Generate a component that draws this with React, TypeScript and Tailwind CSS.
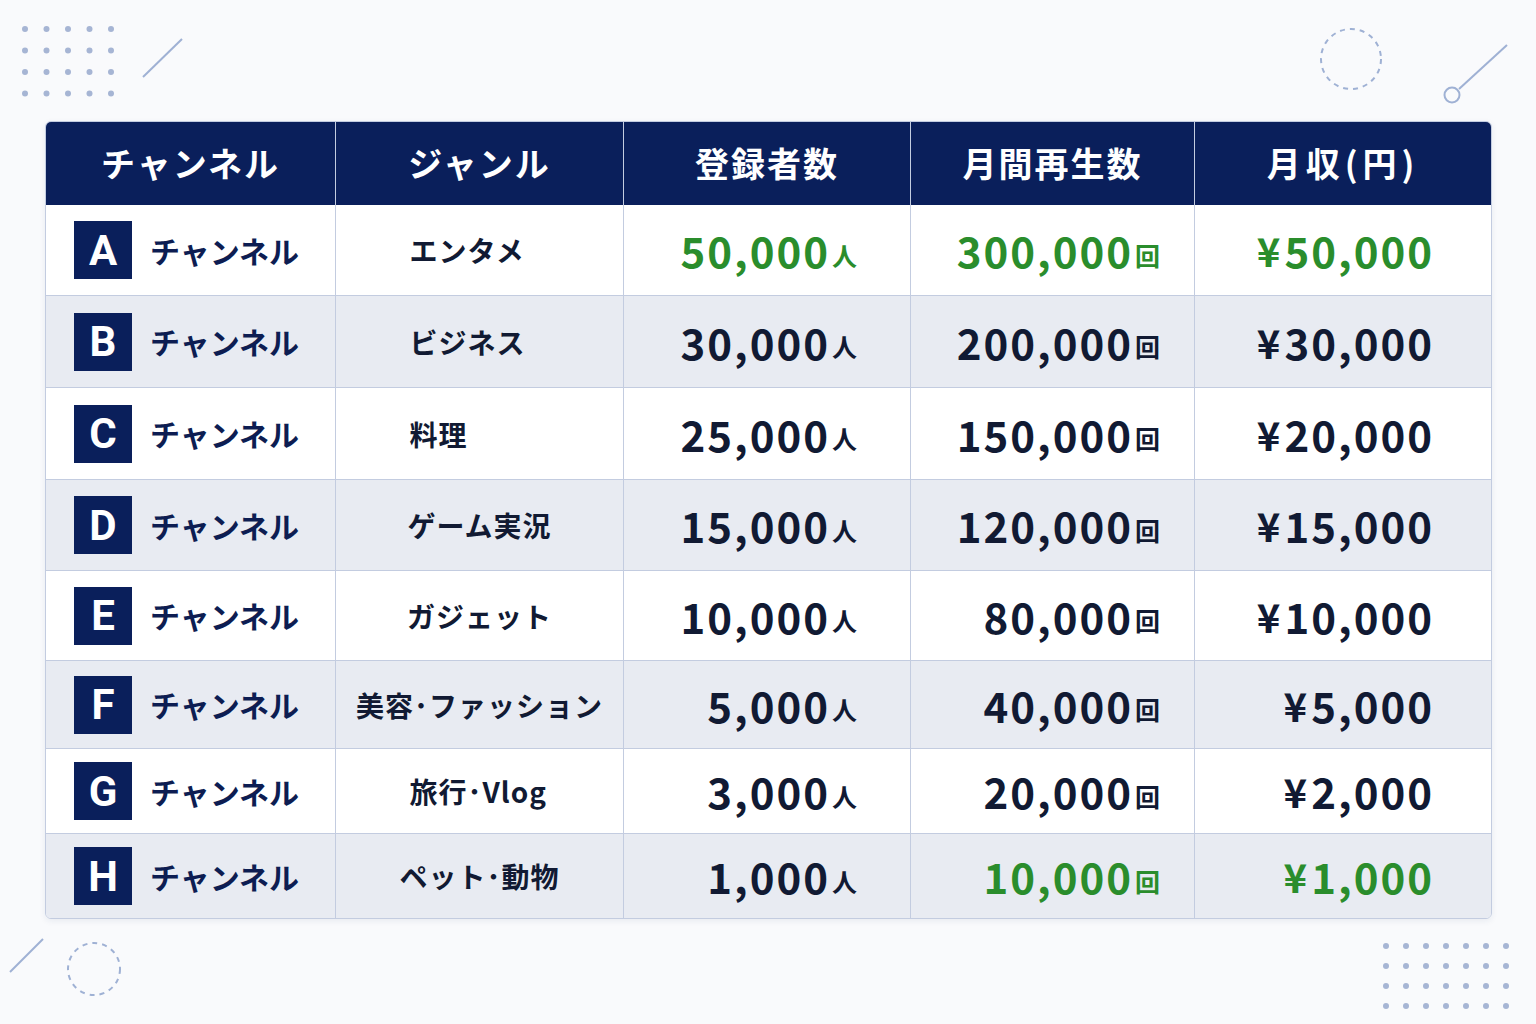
import React from "react";

type Row = {
  letter: string;
  genre: string;
  subs: string;
  plays: string;
  income: string;
  height: string;
  shaded: boolean;
  greenSubs?: boolean;
  greenPlays?: boolean;
  greenIncome?: boolean;
};

const ROWS: Row[] = [
  { letter: "A", genre: "エンタメ", subs: "50,000", plays: "300,000", income: "50,000", height: "h-[91px]", shaded: false, greenSubs: true, greenPlays: true, greenIncome: true },
  { letter: "B", genre: "ビジネス", subs: "30,000", plays: "200,000", income: "30,000", height: "h-[92px]", shaded: true },
  { letter: "C", genre: "料理", subs: "25,000", plays: "150,000", income: "20,000", height: "h-[92px]", shaded: false },
  { letter: "D", genre: "ゲーム実況", subs: "15,000", plays: "120,000", income: "15,000", height: "h-[91px]", shaded: true },
  { letter: "E", genre: "ガジェット", subs: "10,000", plays: "80,000", income: "10,000", height: "h-[90px]", shaded: false },
  { letter: "F", genre: "美容・ファッション", subs: "5,000", plays: "40,000", income: "5,000", height: "h-[88px]", shaded: true },
  { letter: "G", genre: "旅行・Vlog", subs: "3,000", plays: "20,000", income: "2,000", height: "h-[85px]", shaded: false },
  { letter: "H", genre: "ペット・動物", subs: "1,000", plays: "10,000", income: "1,000", height: "h-[84px]", shaded: true, greenPlays: true, greenIncome: true },
];

const HEADERS = ["チャンネル", "ジャンル", "登録者数", "月間再生数", "月収(円)"];

const FONT = "[font-family:'Noto_Sans_CJK_JP','Noto_Sans',sans-serif]";

function DotGrid({ cols, rows, gap }: { cols: number; rows: number; gap: number }) {
  return (
    <svg width={(cols - 1) * gap + 8} height={(rows - 1) * gap + 8}>
      {Array.from({ length: rows }).map((_, r) =>
        Array.from({ length: cols }).map((_, c) => (
          <circle key={`${r}-${c}`} cx={4 + c * gap} cy={4 + r * gap} r={3} fill="#a6b5d4" />
        ))
      )}
    </svg>
  );
}

function Decorations() {
  return (
    <>
      <div className="absolute left-[21px] top-[25px]">
        <DotGrid cols={5} rows={4} gap={21.5} />
      </div>
      <svg className="absolute left-0 top-0" width={1536} height={1024} fill="none">
        <line x1={143} y1={77} x2={182} y2={39} stroke="#9fb1d4" strokeWidth={2} />
        <circle cx={1351} cy={59} r={30} stroke="#9fb1d4" strokeWidth={2} strokeDasharray="5 5" />
        <line x1={1507} y1={45} x2={1459} y2={89} stroke="#9fb1d4" strokeWidth={2} />
        <circle cx={1452} cy={95} r={7.5} stroke="#9fb1d4" strokeWidth={2} />
        <line x1={10} y1={972} x2={43} y2={939} stroke="#9fb1d4" strokeWidth={2} />
        <circle cx={94} cy={969} r={26} stroke="#9fb1d4" strokeWidth={2} strokeDasharray="5 5" />
      </svg>
      <div className="absolute left-[1382px] top-[942px]">
        <DotGrid cols={7} rows={4} gap={20} />
      </div>
    </>
  );
}

// genre labels: the middle dot is set half-width so it sits tight
function Genre({ text }: { text: string }) {
  return (
    <span className="min-w-[140px] text-left text-[28px] font-bold tracking-[1px] text-[#111a33]">
      {text.replace(/・/g, "･")}
    </span>
  );
}

function NumberCell({ value, unit, green, pad }: { value: string; unit: string; green?: boolean; pad: string }) {
  const color = green ? "text-[#2a8d2c]" : "text-[#111a33]";
  return (
    <div className={`flex h-full items-center justify-end ${pad} ${color}`}>
      <span className="text-[42px] font-bold leading-none tracking-[2px]">{value}</span>
      <span className="ml-[2px] mt-[10px] text-[25px] font-bold leading-none">{unit}</span>
    </div>
  );
}

export default function App() {
  return (
    <div className={`relative h-[1024px] w-[1536px] overflow-hidden bg-[#f9fafc] ${FONT}`}>
      <Decorations />
      <div className="relative ml-[45px] mt-[121px] w-[1447px] overflow-hidden rounded-[6px] border border-[#c3cce0] shadow-[0_2px_6px_rgba(30,50,100,0.08)]">
        <div className="grid h-[83px] grid-cols-[290px_288px_287px_284px_1fr] bg-[#0a1f5b]">
          {HEADERS.map((h, i) => (
            <div
              key={h}
              className={`flex items-center justify-center pb-[3px] text-[34px] font-bold text-white ${i === 4 ? "tracking-[5px]" : "tracking-[2px]"} ${i < 4 ? "border-r border-[#c3cce0]" : ""}`}
            >
              {h}
            </div>
          ))}
        </div>
        {ROWS.map((row, idx) => (
          <div
            key={row.letter}
            className={`grid ${row.height} grid-cols-[290px_288px_287px_284px_1fr] ${row.shaded ? "bg-[#e8ebf2]" : "bg-white"} ${idx < ROWS.length - 1 ? "border-b border-[#c3cce0]" : ""}`}
          >
            <div className="flex items-center border-r border-[#c3cce0] pl-[28px]">
              <div className="flex h-[58px] w-[58px] items-center justify-center bg-[#0a1f5b] font-['Roboto',sans-serif] text-[42px] font-bold text-white">
                {row.letter}
              </div>
              <span className="ml-[18px] text-[30px] font-bold tracking-[0px] text-[#0d1d52]">チャンネル</span>
            </div>
            <div className="flex items-center justify-center border-r border-[#c3cce0]">
              <Genre text={row.genre} />
            </div>
            <div className="border-r border-[#c3cce0]">
              <NumberCell value={row.subs} unit="人" green={row.greenSubs} pad="pr-[53px]" />
            </div>
            <div className="border-r border-[#c3cce0]">
              <NumberCell value={row.plays} unit="回" green={row.greenPlays} pad="pr-[34px]" />
            </div>
            <div
              className={`flex items-center justify-end pr-[57px] ${row.greenIncome ? "text-[#2a8d2c]" : "text-[#111a33]"}`}
            >
              <span className="mr-[4px] text-[40px] font-bold leading-none">¥</span>
              <span className="text-[42px] font-bold leading-none tracking-[2px]">{row.income}</span>
            </div>
          </div>
        ))}
      </div>
    </div>
  );
}
